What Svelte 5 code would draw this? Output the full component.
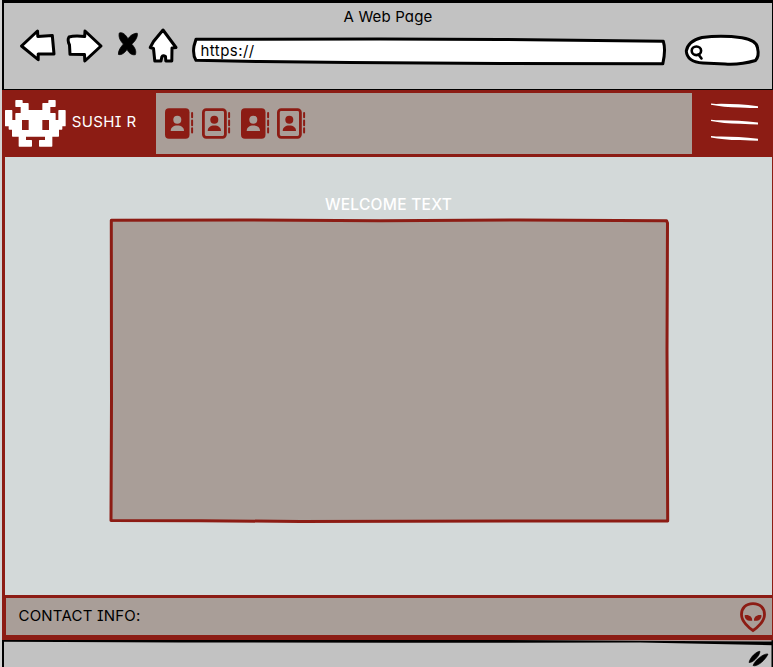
<script>
  const contacts = [true, false, true, false];
  const lines = [0, 16.3, 32.6];
</script>

<div class="window">
  <header class="chrome">
    <div class="title">A Web Page</div>
    <div class="toolbar">
      <svg class="back" viewBox="18 28 40 36" width="40" height="36">
        <path class="ink" d="M21.5 46 L37.5 31 L37.8 36.5 L52.3 35.5 L54 54 L38.2 54 L38.2 59.7 Z" />
      </svg>
      <svg class="forward" viewBox="64 28 40 36" width="40" height="36">
        <path class="ink" d="M69 37 Q74 35.5 84.7 36.5 L85 31 L101 46 L84.8 61 L84.5 54.5 L70 54.3 L69.5 45 Q67 40 69 37 Z" />
      </svg>
      <svg class="stop" viewBox="116 30 24 28" width="24" height="28">
        <path stroke="#000" stroke-width=".8" stroke-linejoin="round" d="M119.3 33 C122.5 31.5 126.5 35.5 128 39 C130 35.5 134 33 137.3 33.3 C138 38 134 42 131.8 44.3 C134.5 47 136.8 51 135.3 54.7 C131 55.5 128.5 52 127 49.5 C125 52.5 121.5 55.5 118.4 54.4 C118.3 50 121 47 123.4 44 C120.3 41 118.3 37 119.3 33 Z" />
      </svg>
      <svg class="home" viewBox="146 26 34 38" width="34" height="38">
        <path class="ink" d="M163 30 L176 47.5 L172 48 L171.8 61 L165.8 61 L165.5 56.5 Q163 54.8 161.8 57 L161 61 L154.8 61 L153.5 48.5 L150.2 47.5 L153.5 41.5 Z" />
      </svg>
      <div class="address">
        <svg viewBox="190 34 480 34" width="480" height="34">
          <path class="ink" d="M196 39.3 L380 39 L500 39.5 Q590 40.5 663.3 41.3 Q666 50 662.8 63.8 L500 63.6 L350 62.5 L260 61.5 L196 60.3 Q192.5 55 194 46 Z" />
        </svg>
        <span>https://</span>
      </div>
      <svg class="search" viewBox="682 32 80 36" width="80" height="36">
        <path class="ink" d="M702 37.5 Q722 35 742 37.8 Q757 40.5 757.5 48 Q759.5 56 755.5 60.5 Q740 65 725 64 L703 63 Q687 62 686.3 51 Q688 41 702 37.5 Z" />
        <ellipse class="lens" cx="696.4" cy="50.8" rx="4.7" ry="4.3" />
        <path class="lens" d="M698.5 54.5 L701.5 58.5" />
      </svg>
    </div>
  </header>

  <section class="page">
    <div class="topbar">
      <div class="brand">
        <svg viewBox="15 45 183 141" width="61" height="47">
          <path fill="#fff" stroke="#fff" stroke-width="4" stroke-linejoin="round" fill-rule="evenodd" d="M48 47 H66 V56 H84 V77 H129 V56 H147 V47 H165 V64 H149 V86 H165 V107 H177 V77 H195 V122 H185 V132 H175 V153 H155 V167 H155 V183 H119 V167 H137 V153 H76 V167 H94 V183 H58 V153 H38 V132 H28 V122 H17 V77 H35 V107 H48 V86 H64 V64 H48 Z M64 103 V137 H88 V103 Z M125 103 V137 H149 V103 Z" />
        </svg>
        <span>SUSHI R</span>
      </div>
      <nav>
        {#each contacts as solid}
          <svg viewBox="0 0 29 31" width="29" height="31">
            {#if solid}
              <rect x="0" y="0.3" width="24.5" height="30.4" rx="4" fill="#8c1c14" />
            {:else}
              <rect x="1.4" y="1.7" width="22" height="27.6" rx="2.8" fill="none" stroke="#8c1c14" stroke-width="2.8" />
            {/if}
            <g fill={solid ? '#a99e98' : '#8c1c14'}>
              <circle cx="12.3" cy="11.7" r="4" />
              <path d="M5.7 23 C5.7 19.5 8.5 17.6 12.3 17.6 C16.3 17.6 19 19.5 19 23 Z" />
            </g>
            <path d="M27.1 5 V9.2 M27.1 12.5 V17.3 M27.1 20.3 V24.4" stroke="#8c1c14" stroke-width="2" stroke-linecap="round" />
          </svg>
        {/each}
      </nav>
      <div class="menu">
        <svg viewBox="0 0 48 40" width="48" height="40">
          {#each lines as y}
            <path transform="translate(0 {y})" fill="#fff" d="M0 .4 Q3 .4 5 .9 Q24 .5 47 3.2 V5.1 Q40 5 29 4.5 Q12 4.2 0 1.8 Z" />
          {/each}
        </svg>
      </div>
    </div>

    <main>
      <h1>WELCOME TEXT</h1>
      <svg class="panel" viewBox="108 217 562 307" width="562" height="307">
        <path fill="#a99e98" stroke="#8c1c14" stroke-width="3" stroke-linejoin="round" d="M111.3 220.3 L240 220 L380 220.7 L520 220 L666.5 220.7 L667.5 223 L667 350 L667.7 521 L520 521 L300 521.4 L200 520.8 L111 520.5 L111.5 400 Z" />
      </svg>
    </main>

    <footer>
      <span>CONTACT INFO:</span>
      <svg viewBox="739 601 28 32" width="28" height="32">
        <path fill="none" stroke="#8c1c14" stroke-width="2.8" d="M753 603.6 C745.5 603.6 741.5 608.5 741.5 614.5 C741.5 621.5 749 628 753 630.5 C757 628 764.5 621.5 764.5 614.5 C764.5 608.5 760.5 603.6 753 603.6 Z" />
        <path fill="#8c1c14" d="M744.7 615.2 C749.5 614.5 752.4 617 752.2 620.7 C747.6 621.5 744.4 619 744.7 615.2 Z M761.5 615.2 C756.7 614.5 753.8 617 754 620.7 C758.6 621.5 761.8 619 761.5 615.2 Z" />
      </svg>
    </footer>
  </section>

  <div class="status">
    <svg viewBox="2 639 771 28" width="771" height="28">
      <path fill="#8c1c14" d="M2 639 H773 V640.3 H2 Z" />
      <path d="M2 640 H500 L773 641.5 V645.3 L640 642.6 L400 642.8 L180 642.5 L2 641.8 Z" />
      <path d="M749 662.5 C750 657 757 651 760 651.3 C760 656 752 663.5 749 662.5 Z M753 665.5 C755 660 764 653 768 654 C766 659.5 757 667.5 753 665.5 Z" stroke="#000" stroke-width=".6" />
    </svg>
  </div>
</div>

<style>
  :global(body) { margin: 0; background: #d3d3d3; }
  .window {
    box-sizing: border-box;
    width: 773px;
    height: 667px;
    padding-left: 2px;
    display: flex;
    flex-direction: column;
    overflow: hidden;
    font-family: Inter, "Open Sans", sans-serif;
    font-feature-settings: "cv11", "cv08";
    font-size: 15px;
    line-height: 20px;
    color: #000;
  }
  svg { display: block; flex: none; }
  .ink { fill: #fff; stroke: #000; stroke-width: 3; stroke-linejoin: round; }
  .lens { fill: none; stroke: #000; stroke-width: 2.6; stroke-linecap: round; }
  .chrome {
    box-sizing: border-box;
    height: 90px;
    flex: none;
    background: #c2c2c2;
    border: solid #000;
    border-width: 3px 1.5px 1px 2px;
  }
  .title { padding-top: 4px; margin-bottom: -1px; text-align: center; letter-spacing: .15px; }
  .toolbar { display: flex; align-items: flex-start; margin-left: 14px; }
  .back { margin-top: 2px; }
  .forward { margin: 2px 0 0 6px; }
  .stop { margin: 4px 0 0 12px; }
  .home { margin: 0 0 0 6px; }
  .address { display: grid; margin: 8px 0 0 10px; }
  .address > * { grid-area: 1 / 1; }
  .address span { padding: 7px 0 0 10.5px; letter-spacing: .45px; }
  .search { margin: 6px 0 0 12px; }
  .page {
    height: 549px;
    flex: none;
    display: flex;
    flex-direction: column;
    background: #d3d9d9;
    border-left: 3px solid #8c1c14;
    border-right: 1px solid #8c1c14;
  }
  .topbar { display: flex; height: 67px; background: #8c1c14; }
  .brand { width: 151px; display: flex; align-items: flex-start; color: #fff; }
  .brand svg { margin: 10px 0 0 .3px; }
  .brand span { margin: 22px 0 0 5.4px; letter-spacing: .4px; }
  nav {
    box-sizing: border-box;
    width: 536px;
    height: 61px;
    margin-top: 3px;
    padding: 15px 0 0 9px;
    display: flex;
    background: #a99e98;
  }
  nav svg { margin-right: 8px; }
  nav svg:nth-child(2) { margin-right: 10px; }
  nav svg:nth-child(3) { margin-right: 7px; }
  .menu { flex: 1; padding: 13px 0 0 19px; }
  main { height: 438px; display: flex; flex-direction: column; align-items: center; }
  h1 {
    margin: 38px 0 0;
    font-size: 15.5px;
    font-weight: 500;
    line-height: 20px;
    letter-spacing: .27px;
    color: #fff;
  }
  .panel { margin: 2px 0 0 1px; }
  footer {
    box-sizing: border-box;
    height: 44px;
    display: flex;
    justify-content: space-between;
    align-items: flex-start;
    padding: 3px 5px 0 12.5px;
    background: #a99e98;
    border: solid #8c1c14;
    border-width: 3px 0 4px 1.5px;
  }
  footer span { margin-top: 5px; letter-spacing: .2px; }
  .status {
    box-sizing: border-box;
    height: 28px;
    flex: none;
    background: #c2c2c2;
    box-shadow: inset 2px 0 #000, inset -1.5px 0 #000;
  }
</style>
